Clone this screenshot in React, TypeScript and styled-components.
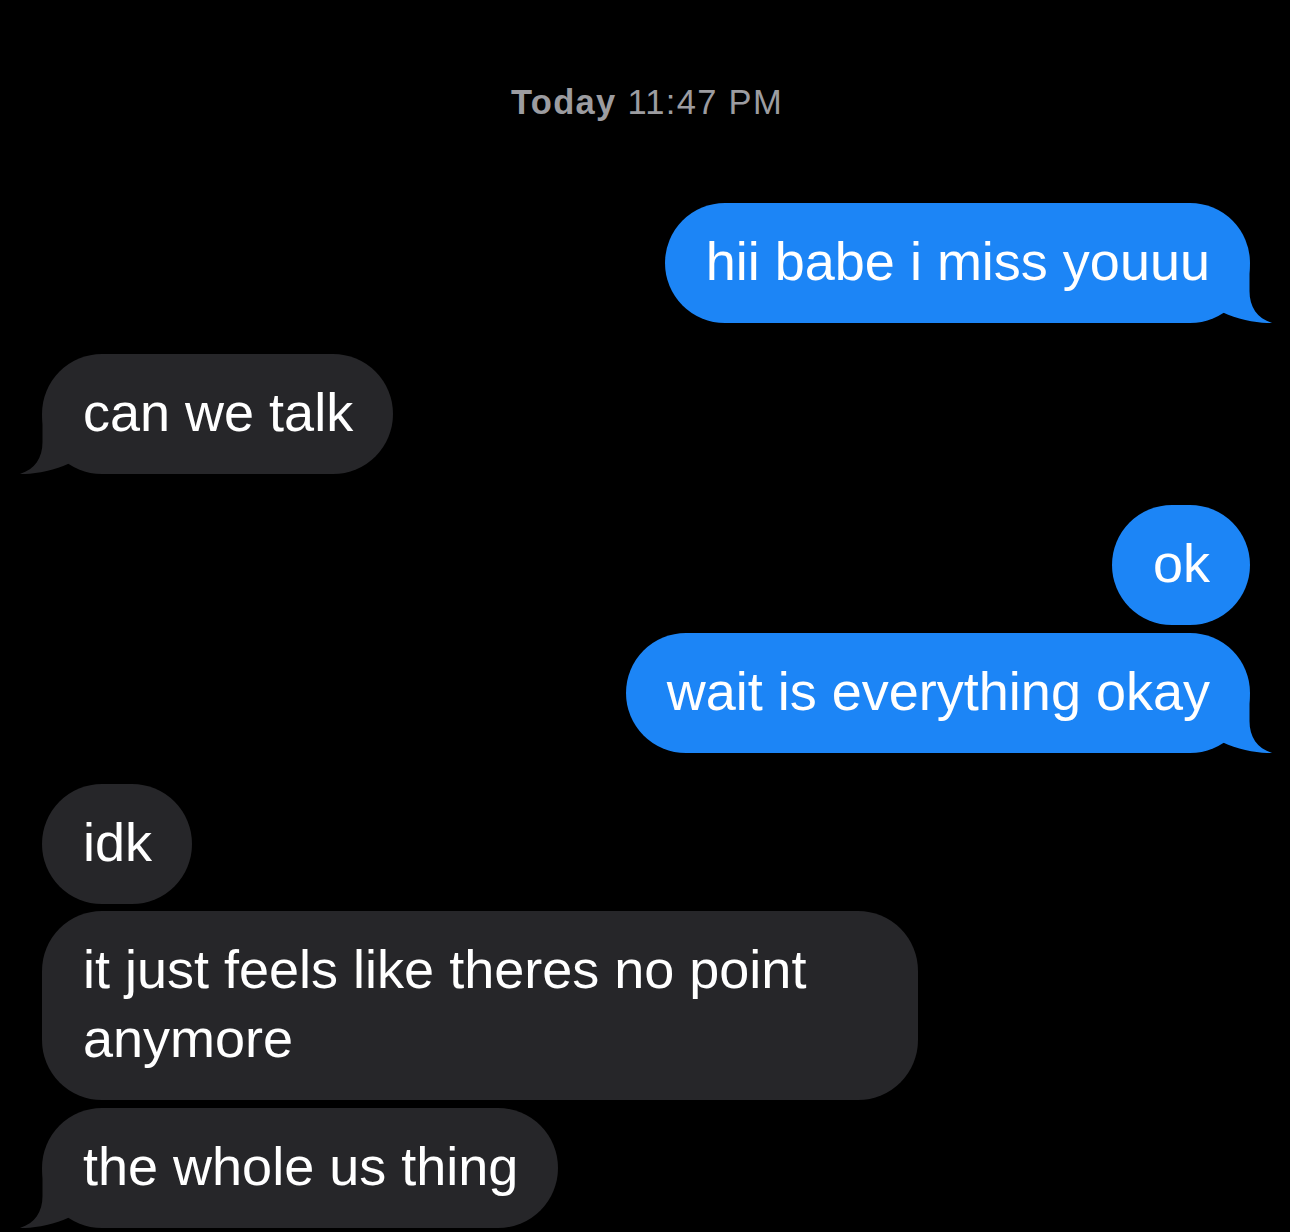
import React from "react";
import styled, { createGlobalStyle } from "styled-components";

const GlobalStyle = createGlobalStyle`
  html, body {
    margin: 0;
    padding: 0;
    background: #000;
  }
  body {
    font-family: "Liberation Sans", Arial, Helvetica, sans-serif;
    -webkit-font-smoothing: antialiased;
  }
`;

const Screen = styled.div`
  width: 1290px;
  min-height: 1232px;
  background: #000;
  box-sizing: border-box;
  padding: 82px 40px 0 42px;
  display: flex;
  flex-direction: column;
  overflow: hidden;
`;

const Timestamp = styled.div`
  text-align: center;
  font-size: 34.5px;
  line-height: 40px;
  letter-spacing: 1.3px;
  color: #9c9ca0;
  margin-bottom: 81px;
  padding-left: 2px;
  b {
    font-weight: 700;
  }
`;

const Thread = styled.div`
  display: flex;
  flex-direction: column;
  gap: 31px;
`;

const Group = styled.div<{ $me: boolean }>`
  display: flex;
  flex-direction: column;
  align-items: ${(p) => (p.$me ? "flex-end" : "flex-start")};
  gap: 7.5px;
`;

const Bubble = styled.div<{ $me: boolean }>`
  position: relative;
  box-sizing: border-box;
  max-width: 876px;
  padding: 24px 40px 27px 41px;
  border-radius: 60px;
  background: ${(p) => (p.$me ? "#1c85f6" : "#262629")};
  color: #fff;
  font-size: 54px;
  line-height: 69px;
`;

const Tail = styled.svg<{ $me: boolean }>`
  position: absolute;
  bottom: 0;
  width: 50px;
  height: 60px;
  ${(p) =>
    p.$me
      ? "right: -22px;"
      : "left: -22px; transform: scaleX(-1);"}
`;

type Msg = { text: string };
type G = { me: boolean; msgs: Msg[] };

const groups: G[] = [
  { me: true, msgs: [{ text: "hii babe i miss youuu" }] },
  { me: false, msgs: [{ text: "can we talk" }] },
  { me: true, msgs: [{ text: "ok" }, { text: "wait is everything okay" }] },
  {
    me: false,
    msgs: [
      { text: "idk" },
      { text: "it just feels like theres no point anymore" },
      { text: "the whole us thing" },
    ],
  },
];

const TailShape: React.FC<{ me: boolean }> = ({ me }) => (
  <Tail $me={me} viewBox="0 0 50 60" aria-hidden="true">
    <path
      d="M0 0 L27.5 0 L27.5 28 C27.5 44 35 55 50 60 C38 60.5 16 57 1 49.5 L0 50 Z"
      fill={me ? "#1c85f6" : "#262629"}
    />
  </Tail>
);

export default function App() {
  return (
    <>
      <GlobalStyle />
      <Screen>
        <Timestamp>
          <b>Today</b> 11:47 PM
        </Timestamp>
        <Thread>
          {groups.map((g, gi) => (
            <Group key={gi} $me={g.me}>
              {g.msgs.map((m, mi) => (
                <Bubble key={mi} $me={g.me}>
                  {m.text}
                  {mi === g.msgs.length - 1 && <TailShape me={g.me} />}
                </Bubble>
              ))}
            </Group>
          ))}
        </Thread>
      </Screen>
    </>
  );
}
